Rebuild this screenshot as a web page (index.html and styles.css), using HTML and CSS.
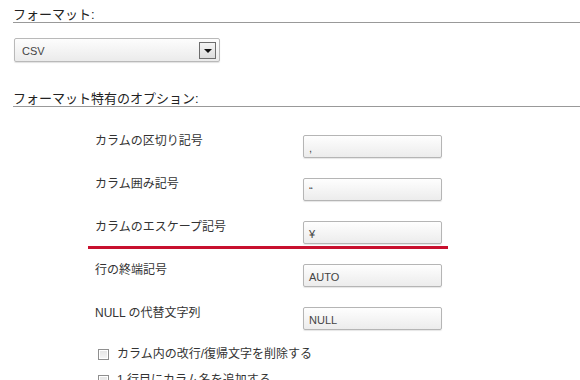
FILE: index.html
```html
<!DOCTYPE html>
<html lang="ja">
    <head>
        <meta charset="utf-8">
        <title>フォーマット設定</title>
        <link rel="stylesheet" href="styles.css">
    </head>
    <body>
        <div class="page">
            <h2 class="section-title">フォーマット:</h2>
            <div class="select">
                <span class="select-value">CSV</span>
                <span class="select-btn"><span class="arrow"></span></span>
            </div>

            <h2 class="section-title second">フォーマット特有のオプション:</h2>
            <div class="options">
                <div class="row">
                    <label class="row-label">カラムの区切り記号</label>
                    <div class="text-input">,</div>
                </div>
                <div class="row">
                    <label class="row-label">カラム囲み記号</label>
                    <div class="text-input">“</div>
                </div>
                <div class="row highlight">
                    <label class="row-label">カラムのエスケープ記号</label>
                    <div class="text-input">¥</div>
                </div>
                <div class="row">
                    <label class="row-label">行の終端記号</label>
                    <div class="text-input">AUTO</div>
                </div>
                <div class="row">
                    <label class="row-label">NULL の代替文字列</label>
                    <div class="text-input">NULL</div>
                </div>
                <div class="check-row first">
                    <span class="checkbox"></span>
                    <span class="check-label">カラム内の改行/復帰文字を削除する</span>
                </div>
                <div class="check-row">
                    <span class="checkbox"></span>
                    <span class="check-label">1 行目にカラム名を追加する</span>
                </div>
            </div>
        </div>
    </body>
</html>
```

FILE: styles.css
```css
body {
    margin: 0;
    background: #fff;
    color: #333;
    font-family: "Liberation Sans", "Noto Sans CJK JP", sans-serif;
    overflow: hidden;
}
.page {
    padding-left: 13px;
}
.section-title {
    margin: 0;
    padding-top: 7px;
    font-size: 13px;
    font-weight: normal;
    line-height: 15px;
    color: #222;
    border-bottom: 1px solid #999;
}
.section-title.second {
    margin-top: 29px;
    padding-top: 0;
}
.select {
    display: flex;
    align-items: center;
    justify-content: space-between;
    box-sizing: border-box;
    width: 206px;
    height: 24px;
    margin: 15px 0 0 1px;
    padding: 0 3px 0 7px;
    border: 1px solid #b9b9b9;
    border-radius: 2px;
    background: linear-gradient(#fdfdfd, #ebebeb);
    box-shadow: 0 1px 1px rgba(0, 0, 0, 0.12);
    font-size: 11px;
    color: #444;
}
.select-value {
    padding-top: 2px;
}
.select-btn {
    display: flex;
    align-items: center;
    justify-content: center;
    box-sizing: border-box;
    width: 17px;
    height: 17px;
    border: 1px solid #6d6d6d;
    background: linear-gradient(#f4f4f4, #dcdcdc);
}
.arrow {
    width: 0;
    height: 0;
    margin-top: 2px;
    border-left: 4px solid transparent;
    border-right: 4px solid transparent;
    border-top: 4px solid #111;
}
.options {
    margin-top: 28px;
    padding-left: 82px;
}
.row {
    display: flex;
    align-items: flex-start;
    height: 23px;
    margin-bottom: 20px;
}
.row-label {
    width: 208px;
    font-size: 12px;
    line-height: 14px;
    margin-top: -1px;
}
.text-input {
    box-sizing: border-box;
    width: 139px;
    height: 23px;
    padding: 4px 5px 0;
    border: 1px solid #b5b5b5;
    border-radius: 2px;
    background: linear-gradient(#fefefe, #ececec);
    box-shadow: 0 1px 1px rgba(0, 0, 0, 0.1);
    font-size: 11px;
    line-height: 16px;
    color: #444;
}
.highlight {
    position: relative;
}
.highlight::after {
    content: "";
    position: absolute;
    left: -7px;
    top: 25px;
    width: 360px;
    height: 3px;
    background: #c8102e;
}
.check-row {
    display: flex;
    align-items: center;
    height: 14px;
    margin-bottom: 12px;
}
.check-row.first {
    margin-top: -3px;
}
.checkbox {
    box-sizing: border-box;
    width: 11px;
    height: 11px;
    margin: 0 8px 0 3px;
    border: 1px solid #8f8f8f;
    background: linear-gradient(#e4e4e4, #f6f6f6);
    box-shadow: inset 0 0 0 1px #fff;
}
.check-label {
    font-size: 12px;
    line-height: 14px;
}
```
